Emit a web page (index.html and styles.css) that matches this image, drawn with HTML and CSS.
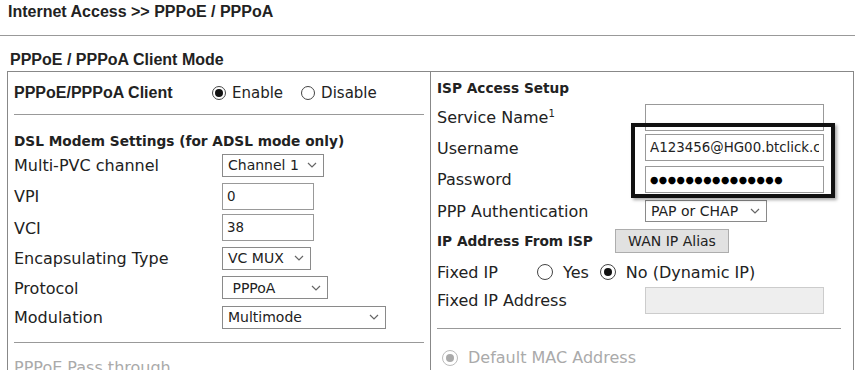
FILE: index.html
```html
<!DOCTYPE html>
<html lang="en">
<head>
    <meta charset="UTF-8">
    <meta name="viewport" content="width=device-width, initial-scale=1.0">
    <title>Internet Access - PPPoE / PPPoA</title>
    <link rel="stylesheet" href="styles.css">
</head>
<body>
    <h1 class="page-title">Internet Access &gt;&gt; PPPoE / PPPoA</h1>
    <hr class="page-rule">
    <h2 class="section-title">PPPoE / PPPoA Client Mode</h2>

    <div class="panel">
        <!-- left column -->
        <div class="col col-left">
            <div class="client-row">
                <span class="client-label">PPPoE/PPPoA Client</span>
                <span class="radio-option opt-enable"><span class="radio checked"></span>Enable</span>
                <span class="radio-option"><span class="radio"></span>Disable</span>
            </div>
            <hr class="divider">
            <h3 class="group-title">DSL Modem Settings (for ADSL mode only)</h3>
            <div class="rows dsl-rows">
                <div class="row">
                    <span class="label">Multi-PVC channel</span>
                    <div class="select sel-channel">Channel 1<svg class="chev" viewBox="0 0 10 6"><path d="M1 1l4 4 4-4"/></svg></div>
                </div>
                <div class="row">
                    <span class="label">VPI</span>
                    <input class="field field-short" type="text" value="0">
                </div>
                <div class="row">
                    <span class="label">VCI</span>
                    <input class="field field-short" type="text" value="38">
                </div>
                <div class="row">
                    <span class="label">Encapsulating Type</span>
                    <div class="select sel-encap">VC MUX<svg class="chev" viewBox="0 0 10 6"><path d="M1 1l4 4 4-4"/></svg></div>
                </div>
                <div class="row">
                    <span class="label">Protocol</span>
                    <div class="select sel-protocol">&nbsp;PPPoA<svg class="chev" viewBox="0 0 10 6"><path d="M1 1l4 4 4-4"/></svg></div>
                </div>
                <div class="row">
                    <span class="label">Modulation</span>
                    <div class="select sel-modulation">Multimode<svg class="chev" viewBox="0 0 10 6"><path d="M1 1l4 4 4-4"/></svg></div>
                </div>
            </div>
            <hr class="divider divider-low">
            <div class="muted-title">PPPoE Pass through</div>
        </div>

        <!-- right column -->
        <div class="col col-right">
            <div class="rows isp-rows">
                <div class="row"><h3 class="group-title">ISP Access Setup</h3></div>
                <div class="row">
                    <span class="label">Service Name<sup>1</sup></span>
                    <input class="field field-long" type="text" value="">
                </div>
                <div class="row">
                    <span class="label">Username</span>
                    <input class="field field-long" type="text" value="A123456@HG00.btclick.com">
                </div>
                <div class="row">
                    <span class="label">Password</span>
                    <div class="field field-long password">&#9679;&#9679;&#9679;&#9679;&#9679;&#9679;&#9679;&#9679;&#9679;&#9679;&#9679;&#9679;&#9679;&#9679;&#9679;</div>
                </div>
                <div class="row">
                    <span class="label">PPP Authentication</span>
                    <div class="select sel-auth">PAP or CHAP<svg class="chev" viewBox="0 0 10 6"><path d="M1 1l4 4 4-4"/></svg></div>
                </div>
                <div class="row">
                    <span class="label label-bold label-ip">IP Address From ISP</span>
                    <button class="btn">WAN IP Alias</button>
                </div>
                <div class="row">
                    <span class="label label-fixed">Fixed IP</span>
                    <span class="radio-option opt-yes"><span class="radio"></span>Yes</span>
                    <span class="radio-option"><span class="radio checked"></span>No (Dynamic IP)</span>
                </div>
                <div class="row">
                    <span class="label">Fixed IP Address</span>
                    <input class="field field-long" type="text" value="" disabled>
                </div>
            </div>
            <hr class="divider divider-right">
            <div class="muted-row"><span class="radio checked muted"></span>Default MAC Address</div>

            <div class="highlight"></div>
        </div>
    </div>
</body>
</html>
```

FILE: styles.css
```css
body {
    margin: 0;
    font-family: "DejaVu Sans", Verdana, sans-serif;
    color: #222;
    background: #fff;
    overflow: hidden;
}
.page-title {
    font-family: "Liberation Sans", Arial, sans-serif;
    font-size: 16px;
    font-weight: bold;
    margin: 0;
    padding: 3px 0 0 8px;
    line-height: 18px;
    color: #222;
}
.page-rule {
    width: 855px;
    margin: 14px 0 0 0;
    border: 0;
    border-top: 1px solid #999;
}
.section-title {
    font-family: "Liberation Sans", Arial, sans-serif;
    font-size: 16px;
    font-weight: bold;
    margin: 0;
    padding: 15px 0 0 10px;
    line-height: 18px;
}
.panel {
    display: grid;
    grid-template-columns: 423px 1fr;
    width: 845px;
    height: 298px;
    overflow: hidden;
    margin: 2px 0 0 7px;
    border: 1px solid #888;
    border-bottom: 0;
}
.col {
    position: relative;
}
.col-left {
    border-right: 1px solid #888;
    padding: 0 6px;
}
.col-right {
    padding: 0 6px;
}
.client-row {
    display: flex;
    align-items: center;
    height: 42px;
}
.client-label {
    font-family: "Liberation Sans", Arial, sans-serif;
    font-size: 16px;
    font-weight: bold;
    width: 198px;
}
.radio-option {
    display: flex;
    align-items: center;
    font-size: 15px;
}
.opt-enable {
    margin-right: 18px;
}
.radio {
    display: inline-block;
    box-sizing: border-box;
    width: 14px;
    height: 14px;
    border: 1px solid #444;
    border-radius: 50%;
    margin-right: 6px;
    position: relative;
    background: #fff;
}
.radio.checked::after {
    content: "";
    position: absolute;
    left: 2px;
    top: 2px;
    width: 8px;
    height: 8px;
    border-radius: 50%;
    background: #111;
}
.divider {
    border: 0;
    border-top: 1px solid #999;
    margin: 0;
}
.group-title {
    font-size: 13.7px;
    font-weight: bold;
    margin: 0;
    padding-top: 17px;
    line-height: 18px;
}
.rows {
    display: grid;
}
.dsl-rows {
    grid-template-rows: 30px 32px 31px 30px 29px 30px;
}
.row {
    display: flex;
    align-items: center;
}
.label {
    width: 208px;
    flex-shrink: 0;
    font-size: 16px;
    padding-top: 1px;
    white-space: nowrap;
}
.label sup {
    font-size: 10px;
    line-height: 0;
}
.select {
    box-sizing: border-box;
    display: flex;
    align-items: center;
    justify-content: space-between;
    height: 23px;
    padding: 0 6px 0 5px;
    border: 1px solid #8a8a8a;
    background: #fff;
    font-size: 14px;
    color: #222;
}
.chev {
    width: 10px;
    height: 6px;
    fill: none;
    stroke: #666;
    stroke-width: 1.2;
}
.sel-channel { width: 102px; }
.sel-encap { width: 89px; }
.sel-protocol { width: 106px; }
.sel-modulation { width: 164px; }
.sel-auth { width: 122px; height: 22px; }
.field {
    box-sizing: border-box;
    height: 27px;
    border: 1px solid #999;
    padding: 0 4px;
    font-family: "DejaVu Sans", Verdana, sans-serif;
    font-size: 13.4px;
    color: #222;
    background: #fff;
    outline: none;
}
.field-short { width: 92px; }
.field-long { width: 179px; }
.field:disabled {
    background: #eee;
    border-color: #ccc;
}
.password {
    display: flex;
    align-items: center;
    font-size: 9.6px;
    letter-spacing: 0.5px;
    color: #000;
}
.divider-low {
    margin-top: 10px;
}
.muted-title {
    font-size: 16px;
    color: #aaa;
    padding-top: 15px;
}
.col-right .group-title {
    padding-top: 2px;
}
.isp-rows {
    grid-template-rows: 30px 30px 31px 32px 31px 29px 31px 28px;
}
.label-bold {
    font-weight: bold;
    font-size: 13.7px;
}
.label-ip {
    width: 178px;
}
.btn {
    height: 24px;
    width: 114px;
    background: #e1e1e1;
    border: 1px solid #adadad;
    font-family: "DejaVu Sans", Verdana, sans-serif;
    font-size: 14px;
    color: #222;
    padding: 0;
}
.label-fixed {
    width: 100px;
    padding-top: 3px;
}
.opt-yes {
    margin-right: 11px;
}
.col-right .radio-option {
    font-size: 16px;
    padding-top: 3px;
}
.col-right .radio-option .radio {
    width: 16px;
    height: 16px;
    margin-right: 10px;
}
.col-right .radio-option .radio.checked::after {
    left: 3px;
    top: 3px;
}
.divider-right {
    margin-top: 14px;
    margin-right: 6px;
}
.muted-row {
    display: flex;
    align-items: center;
    font-size: 16px;
    color: #aaa;
    padding: 19px 0 0 5px;
}
.radio.muted {
    width: 16px;
    height: 16px;
    border-color: #bbb;
    margin-right: 10px;
}
.radio.muted::after {
    left: 3px;
    top: 3px;
    background: #aaa;
}
.highlight {
    position: absolute;
    left: 200px;
    top: 51px;
    width: 204px;
    height: 75px;
    box-sizing: border-box;
    border: 4px solid #111;
    box-shadow: 2px 2px 3px rgba(0, 0, 0, 0.35);
}
```
